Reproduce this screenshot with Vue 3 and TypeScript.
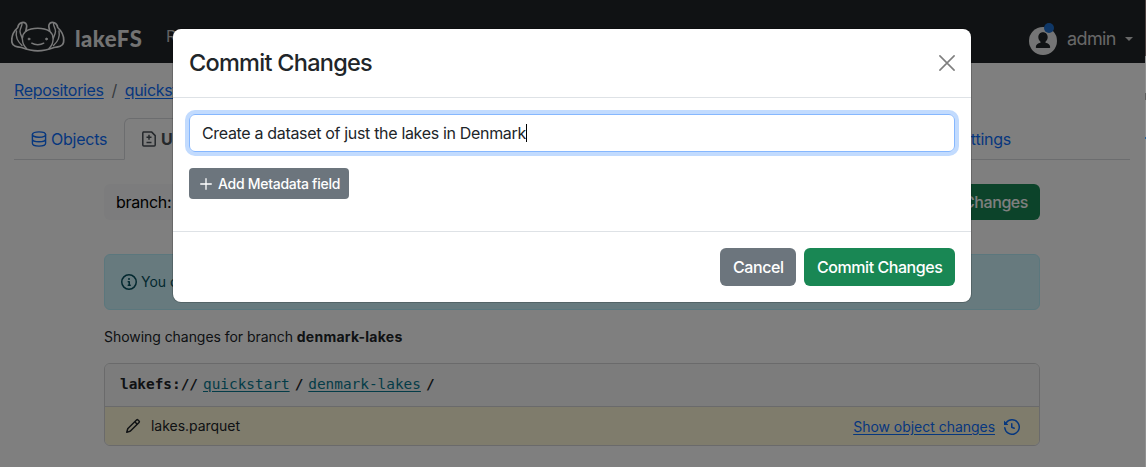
<script setup lang="ts">
import { ref } from 'vue'

const user = 'admin'
const repository = 'quickstart'
const branch = 'denmark-lakes'
const message = ref('Create a dataset of just the lakes in Denmark')
</script>

<template>
  <div class="screen">
    <header class="navbar">
      <svg class="logo" viewBox="0 0 54 32" fill="none" stroke="#fff" stroke-width="1.700" stroke-linecap="round" stroke-linejoin="round">
        <path d="M15 11C21 7.300 32.500 7.300 38.500 11" />
        <path d="M15 11C14.700 8.500 17 6 14.800 3.500C12.500 1.700 7.500 2 6.800 7.500C2.500 11.500.2 17.500 1 22.500C1.700 26.500 6 27 10.500 27.500C16 29.500 20 30.800 26.800 30.800C33.500 30.800 37.500 29.500 43 27.500C47.500 27 51.800 26.500 52.500 22.500C53.300 17.500 51 11.500 46.700 7.500C46 2 41 1.700 38.700 3.500C36.500 6 38.800 8.500 38.500 11" />
        <path d="M10.500 3C12.500 4 8.700 8 9 11.500C9.300 15 11.500 17 11.500 20C11.500 23 12.500 25.500 15.500 28.500M43 3C41 4 44.800 8 44.500 11.500C44.200 15 42 17 42 20C42 23 41 25.500 38 28.500" stroke-width="1.400" />
        <path d="M5.500 11C4.500 16 6 21 11 25.500M48 11C49 16 47.500 21 42.500 25.500" stroke-width="1.400" />
        <path d="M15 11C12.800 13 11.500 15.500 11.500 18M38.500 11C40.700 13 42 15.500 42 18" stroke-width="1.400" />
        <path d="M20.800 23.200C24 25.200 29.500 25.200 32.700 23.200" stroke-width="1.500" />
        <circle cx="18" cy="19" r="1" fill="#fff" stroke-width=".7" />
        <circle cx="35.500" cy="19" r="1" fill="#fff" stroke-width=".7" />
      </svg>
      <span class="brand">lakeFS</span>
      <nav class="links"><span>Repositories</span><span>Administration</span></nav>
      <div class="account">
        <span class="avatar">
          <svg viewBox="0 0 28 28"><circle cx="14" cy="14" r="14" fill="#fff" /><path d="M14 5.200c-3 0-4.700 2.200-4.700 4.900 0 1.900.9 3.600 2.200 4.600v1.100c-2.700.5-4.700 1.900-4.700 4.200 0 .7.300 1.100 1 1.100h12.400c.7 0 1-.4 1-1.100 0-2.300-2-3.700-4.700-4.200v-1.100c1.300-1 2.200-2.700 2.200-4.600 0-2.700-1.700-4.900-4.700-4.900z" fill="#212529" /></svg>
          <i class="dot"></i>
        </span>
        <span class="user">{{ user }}</span>
        <i class="caret"></i>
      </div>
    </header>

    <main>
      <div class="crumbs"><a>Repositories</a><span class="sep">/</span><a>{{ repository }}</a></div>

      <div class="tabs">
        <a class="tab">
          <svg width="16" height="16" viewBox="0 0 16 16" fill="none" stroke="currentColor" stroke-width="1.400"><ellipse cx="8" cy="3.600" rx="6.600" ry="2.700" /><path d="M1.400 3.600v8.700c0 1.600 3 2.800 6.600 2.800s6.600-1.200 6.600-2.800V3.600M1.400 8c0 1.600 3 2.800 6.600 2.800s6.600-1.200 6.600-2.800" /></svg>
          <span>Objects</span>
        </a>
        <a class="tab active">
          <svg width="16" height="16" viewBox="0 0 16 16" fill="none" stroke="currentColor" stroke-width="1.500" stroke-linejoin="round"><path d="M2.200.9h8.300l3.700 3.700v9.500c0 .6-.4 1-1 1H2.800c-.6 0-1-.4-1-1V1.900c0-.6.4-1 1-1zM8 3.800v5M5.500 6.300h5M5.500 11.500h5" /></svg>
          <b>Uncommitted Changes</b>
        </a>
        <a class="tab settings">Settings</a>
      </div>

      <section class="content">
        <div class="toolbar"><span class="branch">branch:</span><span class="btn success commit">Commit Changes</span></div>
        <div class="alert">
          <svg width="16" height="16" viewBox="0 0 16 16" fill="currentColor"><path fill-rule="evenodd" d="M8 0a8 8 0 1 1 0 16A8 8 0 0 1 8 0ZM1.500 8a6.500 6.500 0 1 0 13 0 6.500 6.500 0 0 0-13 0Zm5-.250A.75.75 0 0 1 7.250 7h1a.75.75 0 0 1 .75.75v2.750h.25a.75.75 0 0 1 0 1.500h-2a.75.75 0 0 1 0-1.500h.25v-2h-.25a.75.75 0 0 1-.75-.75ZM8 6a1 1 0 1 1 0-2 1 1 0 0 1 0 2Z" /></svg>
          <span>You can</span>
        </div>
        <p class="showing">Showing changes for branch <b>{{ branch }}</b></p>
        <div class="card">
          <div class="path"><b>lakefs://</b><a>{{ repository }}</a><b>/</b><a>{{ branch }}</a><b>/</b></div>
          <div class="row">
            <svg width="16" height="16" viewBox="0 0 16 16" fill="currentColor"><path fill-rule="evenodd" d="M11.013 1.427a1.750 1.750 0 0 1 2.474 0l1.086 1.086a1.750 1.750 0 0 1 0 2.474l-8.610 8.610c-.21.21-.47.364-.756.445l-3.251.930a.75.75 0 0 1-.927-.928l.929-3.250c.081-.286.235-.547.445-.758l8.610-8.610Zm.176 4.823L9.750 4.810l-6.286 6.287a.253.253 0 0 0-.064.108l-.558 1.953 1.953-.558a.253.253 0 0 0 .108-.064Zm1.238-3.763a.25.25 0 0 0-.354 0L10.811 3.750l1.439 1.440 1.263-1.263a.25.25 0 0 0 0-.354Z" /></svg>
            <span class="file">lakes.parquet</span>
            <a class="show">Show object changes</a>
            <svg class="history" width="16" height="16" viewBox="0 0 16 16" fill="currentColor"><path d="m.427 1.927 1.215 1.215a8.002 8.002 0 1 1-1.600 5.685.75.75 0 1 1 1.493-.154 6.500 6.500 0 1 0 1.180-4.458l1.358 1.358A.25.25 0 0 1 3.896 6H.250A.25.25 0 0 1 0 5.750V2.104a.25.25 0 0 1 .427-.177ZM7.750 4a.75.75 0 0 1 .75.75v2.992l2.028.812a.75.75 0 0 1-.557 1.392l-2.500-1A.751.751 0 0 1 7 8.250v-3.500A.75.75 0 0 1 7.750 4Z" /></svg>
          </div>
        </div>
      </section>
    </main>

    <div class="backdrop"><i class="edge"></i></div>

    <div class="modal">
      <div class="head">
        <h4>Commit Changes</h4>
        <svg class="close" width="16" height="16" viewBox="0 0 16 16" stroke="#7f7f7f" stroke-width="1.600" stroke-linecap="round"><path d="M.9.9l14.200 14.200M15.100.9L.9 15.100" /></svg>
      </div>
      <div class="body">
        <div class="field"><span>{{ message }}</span><i class="cursor"></i></div>
        <div class="add">
          <svg width="12" height="12" viewBox="0 0 12 12" stroke="#fff" stroke-width="1.300" stroke-linecap="round"><path d="M6 .7v10.600M.7 6h10.600" /></svg>
          <span>Add Metadata field</span>
        </div>
      </div>
      <div class="foot"><span class="btn gray">Cancel</span><span class="btn success">Commit Changes</span></div>
    </div>
  </div>
</template>

<style>
body { margin: 0; background: #808080; overflow: hidden; }
</style>

<style scoped>
* { box-sizing: border-box; }
.screen { position: relative; width: 1146px; height: 467px; overflow: hidden; background: #fff; color: #212529; font: 16px/24px Inter, "Liberation Sans", sans-serif; letter-spacing: -0.33px; }
svg { flex: none; display: block; }
a { text-decoration: none; }
.navbar { display: flex; align-items: center; height: 63px; padding: 0 13px 0 11px; background: #212529; }
.logo { width: 54px; height: 32px; margin-top: 9px; opacity: .95; }
.brand { margin: 14px 0 0 10px; width: 68px; color: #e6e6e6; font: 900 22px/28px Lato, sans-serif; letter-spacing: 0.5px; }
.links { display: flex; gap: 14px; margin: 9px 0 0 23px; color: #c4c5c6; }
.account { display: flex; align-items: center; margin: 15px 0 0 auto; color: #d0d0d0; font-size: 18px; }
.avatar { position: relative; width: 28px; height: 28px; margin-top: 4px; opacity: .9; }
.avatar svg { width: 28px; height: 28px; }
.dot { position: absolute; left: 15px; top: -4px; width: 10px; height: 10px; border-radius: 50%; background: #1f78e0; }
.user { margin-left: 10px; width: 49px; letter-spacing: -0.6px; }
.caret { margin-left: 9px; border: 4px solid transparent; border-top-color: #d0d0d0; border-bottom: 0; }
main { padding: 15px 16px 0 14px; }
.crumbs { display: flex; color: #0d6efd; }
.crumbs a { text-decoration: underline; text-underline-offset: 2px; }
.sep { width: 21px; text-align: center; color: #6c757d; }
.tabs { display: flex; height: 42px; margin-top: 16px; border-bottom: 1px solid #d8dade; color: #0d6efd; }
.tab { display: flex; align-items: center; gap: 4px; height: 42px; padding: 0 16px 0 17px; letter-spacing: -0.25px; }
.tab:first-child { width: 110px; }
.tab.active { border: 1px solid #d8dade; border-bottom-color: #fff; border-radius: 6px 6px 0 0; background: #fff; color: #495057; padding-left: 16px; }
.settings { margin-left: auto; padding: 0; margin-right: 119px; }
.content { margin: 24px 90px 0; }
.toolbar { display: flex; justify-content: space-between; height: 36px; }
.branch { width: 150px; padding: 6px 12px; background: #f8f9fa; border-radius: 6px; color: #000; }
.btn { height: 38px; padding: 7px 13px; border-radius: 6px; color: #fff; line-height: 24px; white-space: nowrap; font-weight: 450; letter-spacing: -0.44px; }
.success { background: #198754; }
.gray { background: #6c757d; }
.toolbar .commit { height: 36px; padding: 6px 12px; }
.alert { display: flex; align-items: center; gap: 4px; height: 56px; margin-top: 34px; padding: 0 16px; border: 1px solid #b6effb; border-radius: 6px; background: #cff4fc; color: #055160; font-size: 14px; letter-spacing: 0; }
.showing { margin: 15px 0 14px; font-size: 14px; letter-spacing: -0.05px; }
.showing b { letter-spacing: 0.25px; }
.card { border: 1px solid #d4d5d6; border-radius: 6px; overflow: hidden; }
.path { display: flex; align-items: center; gap: 5px; height: 43px; padding: 0 15px 2px; border-bottom: 1px solid #d4d5d6; background: #f8f8f8; font: 14.400px/20px "DejaVu Sans Mono", monospace; letter-spacing: 0; }
.path a { color: #087990; text-decoration: underline; text-underline-offset: 2px; }
.row { display: flex; align-items: center; height: 38px; padding: 0 19px 0 20px; background: #fff8d8; font-size: 14px; letter-spacing: -0.03px; }
.file { margin-left: 10px; }
.show { margin: 2px 0 0 auto; color: #0d6efd; text-decoration: underline; text-underline-offset: 2px; }
.history { margin: 1px 0 0 9px; color: #0d6efd; }
.backdrop { position: absolute; inset: 0; background: rgba(0, 0, 0, .5); }
.edge { position: absolute; right: 0; top: 0; width: 1px; height: 467px; background: linear-gradient(#4b4140 0 56px, #919191 56px 93px, #606060 93px 100px, #919191 100px 137px, #24609a 137px 139px, #919191 139px); }
.modal { position: absolute; left: 173px; top: 29px; width: 798px; height: 273px; border-radius: 8px; background: #fff; box-shadow: 0 0 0 1px rgba(0, 0, 0, .18); }
.head { display: flex; align-items: center; justify-content: space-between; height: 69px; padding: 0 16px; border-bottom: 1px solid #dee2e6; }
h4 { margin: 0; font-size: 23.500px; line-height: 36px; font-weight: 550; letter-spacing: -0.73px; }
.body { height: 133px; padding: 16px; }
.field { display: flex; align-items: center; height: 38px; padding: 0 12px; border: 1px solid #86b7fe; border-radius: 6px; box-shadow: 0 0 0 4px #c2dbfe; }
.cursor { width: 1px; height: 18px; background: #000; }
.add { display: flex; align-items: center; gap: 6px; width: 160px; height: 31px; margin-top: 16px; padding: 0 11px; border-radius: 4px; background: #6c757d; color: #fff; font-size: 14px; font-weight: 450; letter-spacing: -0.28px; white-space: nowrap; }
.foot { display: flex; justify-content: flex-end; gap: 8px; height: 71px; padding: 16px; border-top: 1px solid #dee2e6; }
.foot .gray { width: 76px; }
.foot .success { width: 151px; }
</style>
